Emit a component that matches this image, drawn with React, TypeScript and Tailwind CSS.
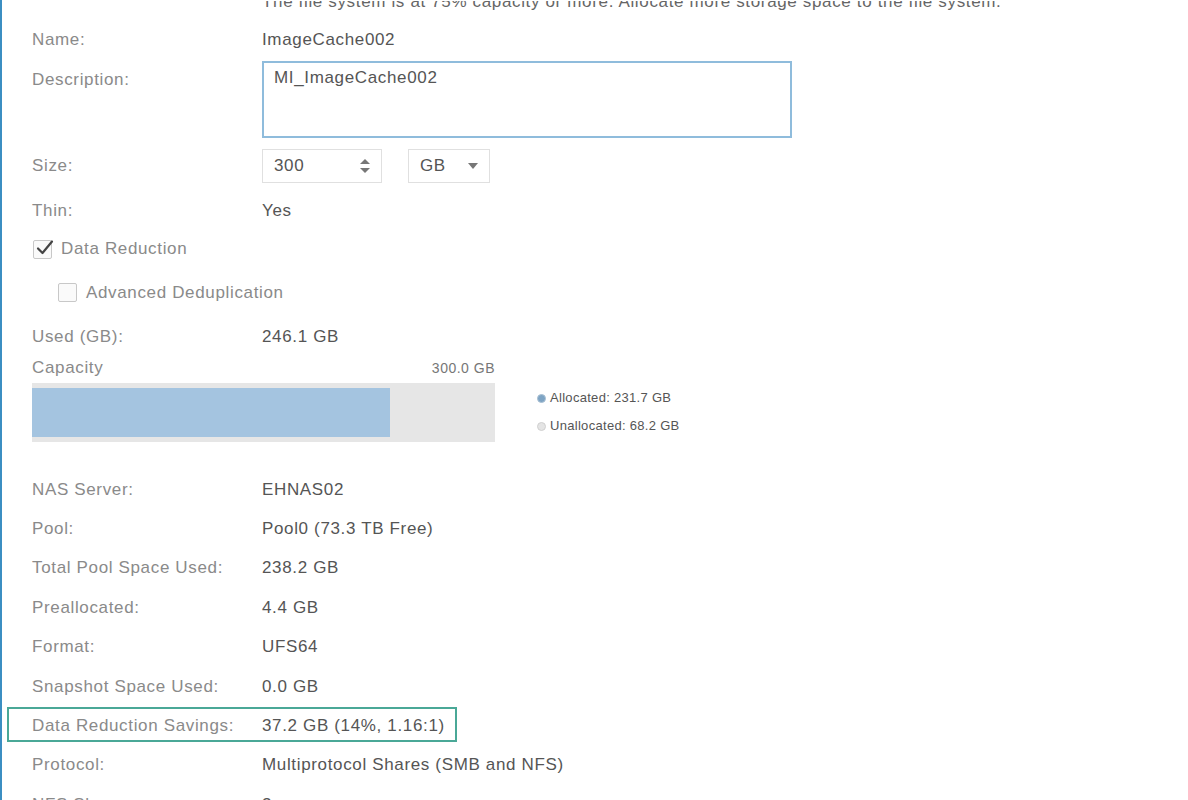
import React from 'react';

// Détails du système de fichiers : libellés à gauche, valeurs à droite.
const font = { fontFamily: '"Liberation Sans", Arial, sans-serif' };

function Row({ label, value, className = '' }: { label: string; value: React.ReactNode; className?: string }) {
  return (
    <div className={`flex items-center h-[39.4px] ${className}`}>
      <div className="w-[230px] shrink-0 text-[#8a8a8a]">{label}</div>
      <div className="text-[#555]">{value}</div>
    </div>
  );
}

function Checkbox({ checked }: { checked?: boolean }) {
  return (
    <span className="relative inline-flex w-[19px] h-[19px] border border-[#c8c8c8] rounded-[2px] bg-[#fafafa] shrink-0">
      {checked && (
        <svg viewBox="0 0 20 20" className="absolute -top-[3px] left-[1px] w-[20px] h-[20px]">
          <path d="M3 10.5 L7.5 15 L17 3.5" fill="none" stroke="#444" strokeWidth="2.2" strokeLinecap="round" strokeLinejoin="round" />
        </svg>
      )}
    </span>
  );
}

export default function App() {
  return (
    <div className="h-[800px] w-[1188px] overflow-hidden bg-white border-l-2 border-[#3b8ec2]" style={font}>
      <div className="pl-[30px] pt-[1px] text-[17px] tracking-[0.65px] leading-[20px]">
        {/* avertissement tronqué en haut */}
        <div className="h-[19px] overflow-hidden">
          <div className="pl-[230px] -mt-[9px] text-[#666]">
            The file system is at 75% capacity or more. Allocate more storage space to the file system.
          </div>
        </div>

        <div className="flex items-center h-[40px]">
          <div className="w-[230px] text-[#8a8a8a]">Name:</div>
          <div className="text-[#555]">ImageCache002</div>
        </div>

        <div className="flex h-[81px]">
          <div className="w-[230px] pt-[10px] text-[#8a8a8a]">Description:</div>
          <div className="mt-[1px] w-[530px] h-[77px] border-2 border-[#8fbcdc] px-[10px] pt-[5px] text-[#555]">
            MI_ImageCache002
          </div>
        </div>

        <div className="flex items-center h-[50px]">
          <div className="w-[230px] text-[#8a8a8a]">Size:</div>
          <div className="flex items-center h-[34px] w-[120px] border border-[#e0e0e0] pl-[11px] pr-[10px] text-[#555]">
            <span className="flex-1">300</span>
            <svg viewBox="0 0 12 18" className="w-[12px] h-[18px]">
              <path d="M1 7 L6 2 L11 7 Z" fill="#777" />
              <path d="M1 11 L6 16 L11 11 Z" fill="#777" />
            </svg>
          </div>
          <div className="ml-[26px] flex items-center h-[34px] w-[82px] border border-[#e0e0e0] pl-[11px] pr-[11px] text-[#555]">
            <span className="flex-1">GB</span>
            <svg viewBox="0 0 10 6" className="w-[10px] h-[6px]">
              <path d="M0 0 L10 0 L5 6 Z" fill="#777" />
            </svg>
          </div>
        </div>

        <div className="flex items-center h-[39px]">
          <div className="w-[230px] text-[#8a8a8a]">Thin:</div>
          <div className="text-[#555]">Yes</div>
        </div>

        <div className="flex items-center h-[38px] gap-[9px] pl-[1px] text-[#8a8a8a]">
          <Checkbox checked />
          <span>Data Reduction</span>
        </div>

        <div className="flex items-center h-[49px] gap-[9px] pl-[26px] text-[#8a8a8a]">
          <Checkbox />
          <span>Advanced Deduplication</span>
        </div>

        <div className="flex items-center h-[40px]">
          <div className="w-[230px] text-[#8a8a8a]">Used (GB):</div>
          <div className="text-[#555]">246.1 GB</div>
        </div>

        {/* barre de capacité */}
        <div className="flex items-center justify-between w-[463px] h-[22px]">
          <span className="text-[#8a8a8a]">Capacity</span>
          <span className="text-[14px] tracking-[0.5px] text-[#777]">300.0 GB</span>
        </div>
        <div className="flex items-center h-[66px]">
          <div className="w-[463px] h-[59px] bg-[#e6e6e6] flex items-center">
            <div className="h-[49px] bg-[#a4c4e0]" style={{ width: `${(231.7 / 300) * 100}%` }} />
          </div>
          <div className="ml-[42px] flex flex-col gap-[12px] text-[13px] tracking-[0.3px] text-[#555] leading-[16px]">
            <div className="flex items-center gap-[4px]">
              <span className="w-[9px] h-[9px] rounded-full bg-[#7ea4c4] border border-[#a9c0d3]" />
              <span>Allocated: 231.7 GB</span>
            </div>
            <div className="flex items-center gap-[4px]">
              <span className="w-[9px] h-[9px] rounded-full bg-[#e4e4e4] border border-[#d0d0d0]" />
              <span>Unallocated: 68.2 GB</span>
            </div>
          </div>
        </div>

        <div className="h-[25px]" />

        <Row label="NAS Server:" value="EHNAS02" />
        <Row label="Pool:" value="Pool0 (73.3 TB Free)" />
        <Row label="Total Pool Space Used:" value="238.2 GB" />
        <Row label="Preallocated:" value="4.4 GB" />
        <Row label="Format:" value="UFS64" />
        <Row label="Snapshot Space Used:" value="0.0 GB" />
        <div className="relative">
          <Row label="Data Reduction Savings:" value="37.2 GB (14%, 1.16:1)" />
          <div className="absolute left-[-25px] top-[1px] w-[450px] h-[35px] border-2 border-[#4aa897] pointer-events-none" />
        </div>
        <Row label="Protocol:" value="Multiprotocol Shares (SMB and NFS)" />
        <Row label="NFS Shares:" value="2" />
      </div>
    </div>
  );
}
